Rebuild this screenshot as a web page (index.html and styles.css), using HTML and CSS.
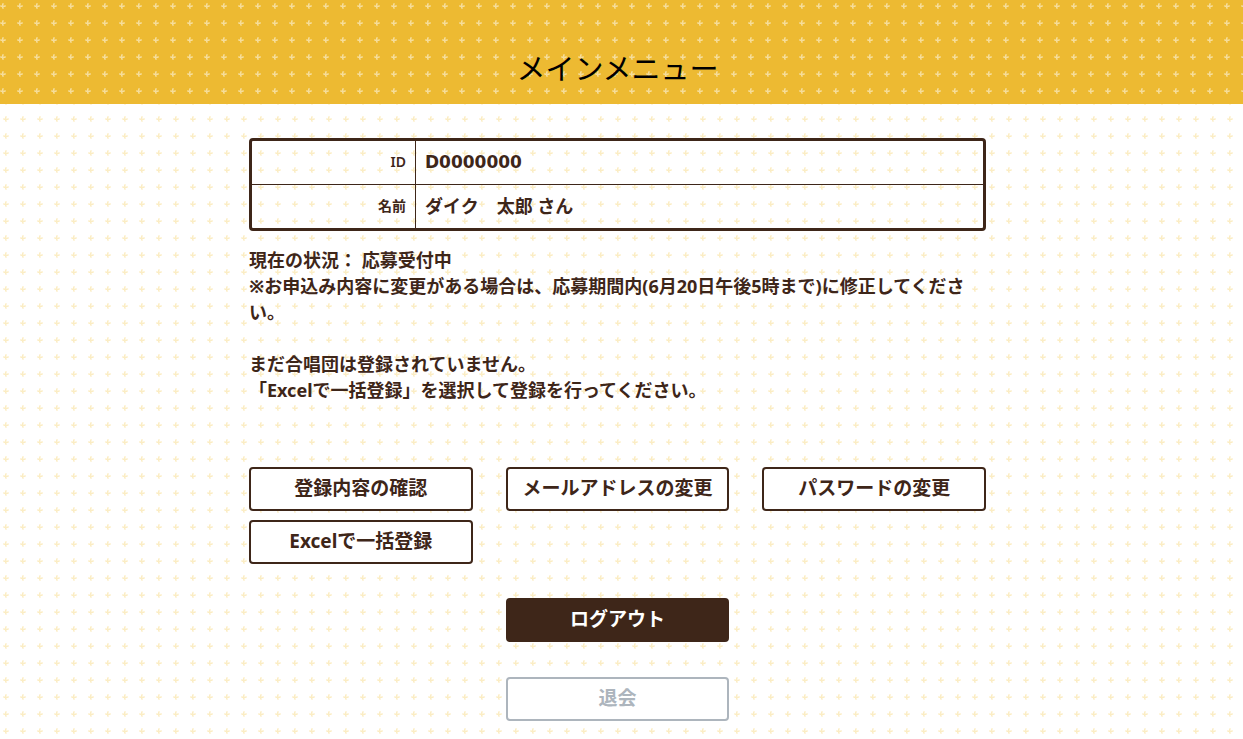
FILE: index.html
```html
<!DOCTYPE html>
<html lang="ja">
<head>
    <meta charset="UTF-8">
    <meta name="viewport" content="width=device-width, initial-scale=1.0">
    <title>メインメニュー</title>
    <link rel="stylesheet" href="styles.css">
</head>
<body>

<header class="page-header">
    <h1>メインメニュー</h1>
</header>

<main>
    <div class="container">
        <table class="user-info">
            <tr>
                <th scope="row">ID</th>
                <td class="user-id">D0000000</td>
            </tr>
            <tr>
                <th scope="row">名前</th>
                <td>ダイク　太郎 さん</td>
            </tr>
        </table>

        <div class="status">
            <p>現在の状況： 応募受付中<br>
            ※お申込み内容に変更がある場合は、応募期間内(6月20日午後5時まで)に修正してください。</p>
            <p>まだ合唱団は登録されていません。<br>
            「Excelで一括登録」を選択して登録を行ってください。</p>
        </div>

        <div class="menu">
            <button type="button" class="btn">登録内容の確認</button>
            <button type="button" class="btn">メールアドレスの変更</button>
            <button type="button" class="btn">パスワードの変更</button>
            <button type="button" class="btn">Excelで一括登録</button>
        </div>

        <div class="account">
            <button type="button" class="btn btn-logout">ログアウト</button>
            <button type="button" class="btn btn-leave">退会</button>
        </div>
    </div>
</main>

</body>
</html>
```
FILE: styles.css
```css
* {
    box-sizing: border-box;
}
body {
    margin: 0;
    color: #3e2619;
    font-family: "Noto Sans", "Noto Sans CJK JP", sans-serif;
    font-size: 18px;
    font-weight: bold;
    line-height: 26px;
    background-color: #fff;
    background-image: url("data:image/svg+xml,%3Csvg xmlns='http://www.w3.org/2000/svg' width='17' height='17'%3E%3Cg fill='%23f5cf68' fill-opacity='.22'%3E%3Cpath d='M2 0h2v6h-2zM0 2h6v2h-6z'/%3E%3Cpath d='M2 1h1v4h-1zM1 3h4v1h-4z'/%3E%3C/g%3E%3C/svg%3E");
    background-position: 3px 14px;
}
.page-header {
    padding: 47px 8px 17px 0;
    background-color: #edba32;
    background-image: url("data:image/svg+xml,%3Csvg xmlns='http://www.w3.org/2000/svg' width='17' height='17'%3E%3Cg fill='%23fff' fill-opacity='.3'%3E%3Cpath d='M2 0h2v6h-2zM0 2h6v2h-6z'/%3E%3Cpath d='M2 1h1v4h-1zM1 3h4v1h-4z'/%3E%3C/g%3E%3C/svg%3E");
    background-position: 0 3px;
}
.page-header h1 {
    margin: 0;
    color: #000;
    font-family: "Noto Sans CJK JP", sans-serif;
    font-size: 29px;
    font-weight: 400;
    line-height: 40px;
    text-align: center;
}
main {
    padding: 34px 8px 18px 0;
}
.container {
    width: 60%;
    max-width: 737px;
    margin: 0 auto;
}
.user-info {
    width: 100%;
    border: 3px solid #3e2619;
    border-radius: 4px;
    border-spacing: 0;
}
.user-info th,
.user-info td {
    height: 43px;
    padding: 0 9px 2px;
}
.user-info th {
    width: 164px;
    border-right: 1px solid #3e2619;
    font-size: 14px;
    font-weight: 600;
    text-align: right;
}
.user-info tr + tr th,
.user-info tr + tr td {
    height: 44px;
    border-top: 1px solid #3e2619;
}
.user-info .user-id {
    font-family: "DejaVu Sans", sans-serif;
    font-size: 17px;
}
.status {
    margin-top: 16px;
}
.status p {
    margin: 0 0 26px;
}
.menu {
    display: grid;
    grid-template-columns: repeat(3, 1fr);
    gap: 9px 33px;
    margin-top: 64px;
}
.btn {
    height: 44px;
    padding: 0 0 4px;
    border: 2px solid #3e2619;
    border-radius: 4px;
    background: #fff;
    color: #3e2619;
    font-family: inherit;
    font-size: 19px;
    font-weight: bold;
    cursor: pointer;
}
.account {
    display: grid;
    grid-template-columns: repeat(3, 1fr);
    gap: 35px 33px;
    margin-top: 34px;
}
.account .btn {
    grid-column: 2;
}
.btn-logout {
    background: #3e2619;
    color: #fff;
}
.account .btn-leave {
    border-color: #adb5bd;
    color: #adb5bd;
}
```
